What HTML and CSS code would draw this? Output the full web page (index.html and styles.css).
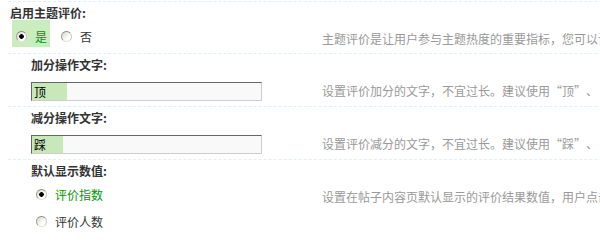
FILE: index.html
```html
<!DOCTYPE html>
<html lang="zh-CN">
<head>
    <meta charset="UTF-8">
    <title>主题评价设置</title>
    <link rel="stylesheet" href="styles.css">
</head>
<body>

    <div class="settings">
        <div class="setting">
            <div class="setting-title">启用主题评价:</div>
            <div class="setting-row">
                <div class="setting-value value-top">
                    <ul class="radio-list inline">
                        <li class="checked"><input type="radio" name="heatthread" value="1" checked> 是</li>
                        <li><input type="radio" name="heatthread" value="0"> 否</li>
                    </ul>
                </div>
                <div class="setting-tips">主题评价是让用户参与主题热度的重要指标，您可以设置是否开启主题评价功能</div>
            </div>
        </div>

        <div class="setting sub">
            <div class="setting-title">加分操作文字:</div>
            <div class="setting-row">
                <div class="setting-value">
                    <input type="text" class="txt" value="顶">
                </div>
                <div class="setting-tips">设置评价加分的文字，不宜过长。建议使用<span class="lq">“</span>顶<span class="rq">”</span>、<span class="lq">“</span>支持<span class="rq">”</span>、<span class="lq">“</span>赞<span class="rq">”</span>等</div>
            </div>
        </div>

        <div class="setting sub">
            <div class="setting-title">减分操作文字:</div>
            <div class="setting-row">
                <div class="setting-value">
                    <input type="text" class="txt txt-short" value="踩">
                </div>
                <div class="setting-tips">设置评价减分的文字，不宜过长。建议使用<span class="lq">“</span>踩<span class="rq">”</span>、<span class="lq">“</span>反对<span class="rq">”</span>等</div>
            </div>
        </div>

        <div class="setting sub">
            <div class="setting-title">默认显示数值:</div>
            <div class="setting-row">
                <div class="setting-value value-top">
                    <ul class="radio-list">
                        <li class="checked-text"><input type="radio" name="defaultshow" value="1" checked> 评价指数</li>
                        <li><input type="radio" name="defaultshow" value="0"> 评价人数</li>
                    </ul>
                </div>
                <div class="setting-tips">设置在帖子内容页默认显示的评价结果数值，用户点击后可以切换显示</div>
            </div>
        </div>
    </div>

</body>
</html>
```

FILE: styles.css
```css
html {
    overflow: hidden;
}
body {
    margin: 1px 0 0 8px;
    font-family: "Noto Sans CJK SC", "Liberation Sans", sans-serif;
    font-size: 12px;
    color: #333;
    background: #fff;
}
.settings {
    width: 900px;
}
.setting {
    border-top: 1px dashed #deeffb;
}
.setting-title {
    padding: 3px 0 0 2px;
    line-height: 15px;
    font-weight: bold;
    color: #333;
}
.sub .setting-title {
    padding-left: 23px;
}
.setting-row {
    display: flex;
}
.setting-value {
    flex: 0 0 314px;
    box-sizing: border-box;
    padding: 10px 0 5px 23px;
}
.setting-value.value-top {
    padding-top: 0;
    padding-bottom: 6px;
}
.setting > .setting-row > .value-top {
    padding-left: 4px;
}
.sub .setting-value.value-top {
    padding-left: 23px;
    padding-bottom: 10px;
}
.setting-tips {
    padding-top: 11px;
    line-height: 15px;
    color: #999;
    white-space: nowrap;
}
/* full-width quotes, as in the old SimSun rendering */
.lq, .rq {
    display: inline-block;
    width: 12px;
}
.lq {
    text-align: right;
}
.rq {
    text-align: left;
}

/* radios */
.radio-list {
    margin: 0;
    padding: 0;
    list-style: none;
}
.radio-list.inline {
    display: flex;
    gap: 7px;
}
.radio-list li {
    display: flex;
    align-items: center;
    gap: 8px;
    height: 13px;
    line-height: 13px;
    padding: 10px 3px 4px 4px;
}
.sub .radio-list li {
    padding-left: 5px;
}
.radio-list li.checked {
    background: #cbecbe;
    color: #090;
}
.radio-list li.checked-text {
    color: #090;
}
.radio-list input {
    -webkit-appearance: none;
    appearance: none;
    width: 11px;
    height: 11px;
    margin: 0;
    border: 1px solid;
    border-color: #8a897c #c9c8bd #e4e3da #a3a295;
    border-radius: 50%;
    background: linear-gradient(135deg, #d8d8cf, #fff 70%);
}
.radio-list input:checked {
    background: radial-gradient(circle, #000 0, #000 2px, transparent 2.6px), linear-gradient(135deg, #d8d8cf, #fff 70%);
}

/* text inputs */
.txt {
    display: block;
    width: 231px;
    height: 19px;
    box-sizing: border-box;
    margin: 0;
    padding: 0 2px;
    border: 1px solid;
    border-color: #666 #ccc #ccc #666;
    background: linear-gradient(90deg, #c8e8b9 35px, #f9f9f9 35px);
    font-family: "Noto Sans CJK SC", "Liberation Sans", sans-serif;
    font-size: 12px;
    color: #000;
    outline: none;
}
.txt-short {
    background: linear-gradient(90deg, #c8e8b9 31px, #f9f9f9 31px);
}
```
